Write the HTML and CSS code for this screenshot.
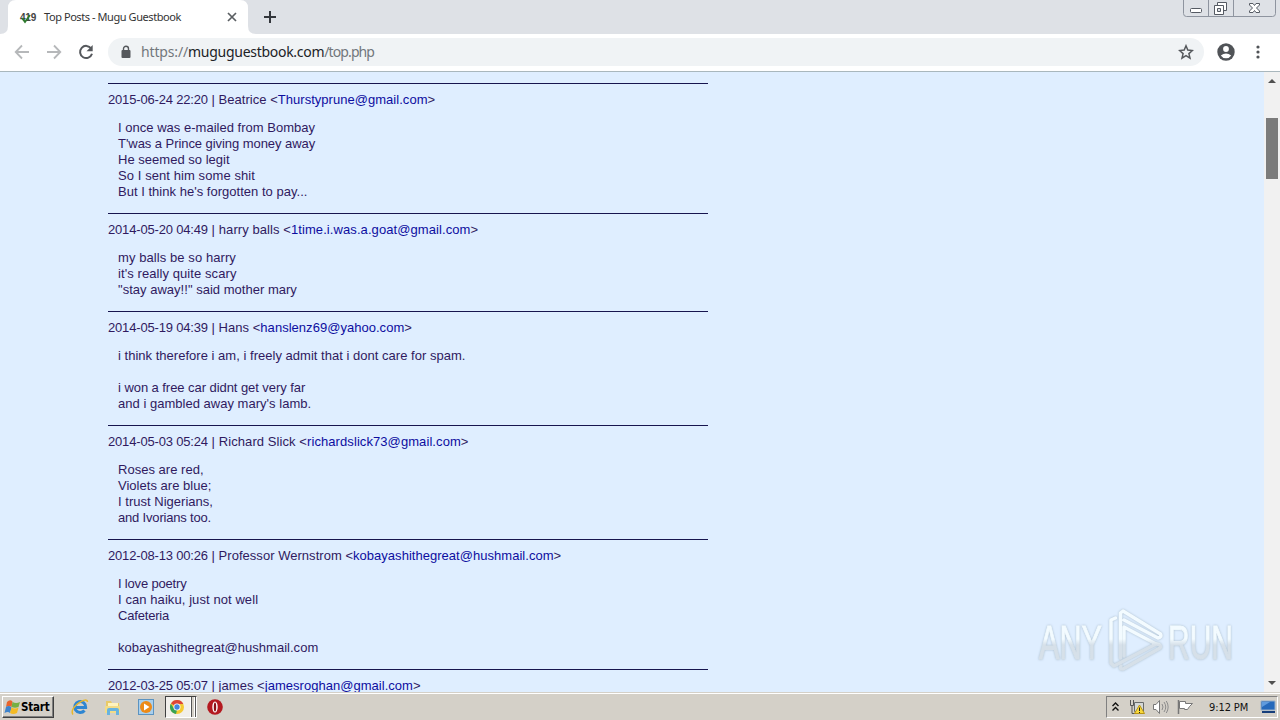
FILE: index.html
```html
<!DOCTYPE html>
<html lang="en">
<head>
<meta charset="utf-8">
<title>Top Posts - Mugu Guestbook</title>
<link rel="stylesheet" href="styles.css">
</head>
<body>
<div class="screen">
  <header class="tabstrip">
    <svg class="tab-shape" width="264" height="34" viewBox="0 0 264 34"><path d="M0 34Q8 34 8 26V8Q8 0 16 0H240Q248 0 248 8V26Q248 34 256 34Z" fill="#fff"/></svg>
    <div class="tab">
      <span class="favicon">419<svg width="12" height="10" viewBox="0 0 12 10"><path d="M1 4L4 8L9 1" fill="none" stroke="#2c7a2c" stroke-width="1.8"/></svg></span>
      <span class="tab-title">Top Posts - Mugu Guestbook</span>
      <svg class="tab-close" width="10" height="10" viewBox="0 0 10 10"><path d="M1 1L9 9M9 1L1 9" stroke="#5a5e62" stroke-width="1.7"/></svg>
    </div>
    <svg class="new-tab" width="14" height="14" viewBox="0 0 14 14"><path d="M7 1V13M1 7H13" stroke="#33363c" stroke-width="2"/></svg>
    <svg class="window-buttons" width="94" height="18" viewBox="0 0 94 18">
      <path d="M.5 0V13.500Q.5 16.500 3.500 16.500H89.500Q92.500 16.500 92.500 13.500V0M25.500 0V16M50.500 0V16" fill="none" stroke="#8e949f"/>
      <rect x="7.500" y="8.500" width="11" height="4" rx="1" fill="#fff" stroke="#555a63"/>
      <path d="M34.500 2.500H43.500V10.500H34.500Z" fill="#fff" stroke="#555a63"/>
      <path d="M31.500 5.500H40.500V14.500H31.500Z" fill="#fff" stroke="#555a63"/><path d="M34.500 8.500H37.500V11.500H34.500Z" fill="#dee1e6" stroke="#555a63"/>
      <path d="M66.500 3.500H70L71.500 5.500L73 3.500H76.500V5L73.500 8L76.500 11V12.500H73L71.500 10.500L70 12.500H66.500V11L69.500 8L66.500 5Z" fill="#fff" stroke="#555a63"/>
    </svg>
  </header>
  <nav class="toolbar">
    <svg class="nav-icon" width="16" height="16" viewBox="0 0 16 16"><path d="M15 8H2M8 1.500L1.700 8L8 14.500" fill="none" stroke="#b6b8ba" stroke-width="1.8"/></svg>
    <svg class="nav-icon" width="16" height="16" viewBox="0 0 16 16"><path d="M1 8H14M8 1.500L14.300 8L8 14.500" fill="none" stroke="#b6b8ba" stroke-width="1.8"/></svg>
    <svg class="nav-icon" width="16" height="16" viewBox="0 0 16 16"><path d="M13.200 4.500A6.100 6.100 0 1 0 14 9.800" fill="none" stroke="#55585c" stroke-width="2"/><path d="M14.700 1V7.200H8.500Z" fill="#55585c"/></svg>
    <div class="omnibox">
      <svg class="lock" width="10" height="14" viewBox="0 0 10 14"><rect x=".5" y="5" width="9" height="8" rx="1" fill="#55585c"/><path d="M2.500 5.500V3.800A2.400 2.400 0 0 1 7.500 3.800V5.500" fill="none" stroke="#55585c" stroke-width="1.400"/></svg>
      <span class="url"><span class="scheme">https://</span><span class="host">muguguestbook.com</span><span class="path">/top.php</span></span>
      <svg class="star" width="16" height="16" viewBox="0 0 16 16"><path d="M8 1.800L9.800 6.100L14.400 6.500L10.900 9.600L12 14.100L8 11.700L4 14.100L5.100 9.600L1.600 6.500L6.200 6.100Z" fill="none" stroke="#55585c" stroke-width="1.500"/></svg>
    </div>
    <svg class="avatar" width="18" height="18" viewBox="0 0 18 18"><circle cx="9" cy="9" r="8.700" fill="#505357"/><circle cx="9" cy="6" r="2.900" fill="#fff"/><path d="M3.800 12.400Q9 8.700 14.200 12.400Q12.300 15.300 9 15.300Q5.700 15.300 3.800 12.400Z" fill="#fff"/></svg>
    <svg class="more" width="4" height="14" viewBox="0 0 4 14"><g fill="#505357"><circle cx="2" cy="2" r="1.600"/><circle cx="2" cy="7" r="1.600"/><circle cx="2" cy="12" r="1.600"/></g></svg>
  </nav>
  <div class="viewport">
    <main class="page">
      <article class="post"><div class="meta snug"><span class="date">2015-06-24 22:20</span> | Beatrice &lt;<a>Thurstyprune@gmail.com</a>&gt;</div>
        <div class="body">I once was e-mailed from Bombay<br><span class="tight">T'was a Prince giving money away</span><br>He seemed so legit<br><span class="loose">So I sent him some shit</span><br>But I think he's forgotten to pay...</div></article>
      <article class="post"><div class="meta"><span class="date">2014-05-20 04:49</span> | harry balls &lt;<a>1time.i.was.a.goat@gmail.com</a>&gt;</div>
        <div class="body"><span class="loose">my balls be so harry</span><br><span class="loose">it's really quite scary</span><br>"stay away!!" said mother mary</div></article>
      <article class="post"><div class="meta snug"><span class="date">2014-05-19 04:39</span> | Hans &lt;<a>hanslenz69@yahoo.com</a>&gt;</div>
        <div class="body">i think therefore i am, i freely admit that i dont care for spam.<br><br><span class="tight">i won a free car didnt get very far</span><br>and i gambled away mary's lamb.</div></article>
      <article class="post"><div class="meta"><span class="date">2014-05-03 05:24</span> | Richard Slick &lt;<a>richardslick73@gmail.com</a>&gt;</div>
        <div class="body">Roses are red,<br>Violets are blue;<br>I trust Nigerians,<br><span class="tighter">and Ivorians too.</span></div></article>
      <article class="post"><div class="meta snug"><span class="date">2012-08-13 00:26</span> | Professor Wernstrom &lt;<a>kobayashithegreat@hushmail.com</a>&gt;</div>
        <div class="body"><span class="tighter">I love poetry</span><br><span class="loose">I can haiku, just not well</span><br><span class="tighter">Cafeteria</span><br><br>kobayashithegreat@hushmail.com</div></article>
      <article class="post"><div class="meta snug"><span class="date">2012-03-25 05:07</span> | james &lt;<a>jamesroghan@gmail.com</a>&gt;</div></article>
    </main>
    <aside class="scrollbar">
      <svg width="8" height="4" viewBox="0 0 8 4"><path d="M0 4L4 0L8 4Z" fill="#505050"/></svg>
      <div class="thumb"></div>
      <svg class="down" width="8" height="4" viewBox="0 0 8 4"><path d="M0 0L4 4L8 0Z" fill="#505050"/></svg>
    </aside>
    <svg class="watermark" width="224" height="80" viewBox="0 0 224 80">
      <defs><linearGradient id="wm" x1="0" y1="0" x2="0" y2="74" gradientUnits="userSpaceOnUse"><stop offset=".5" stop-color="#f3fbff"/><stop offset=".58" stop-color="#d6e0e9"/></linearGradient></defs>
      <g fill="url(#wm)" stroke="url(#wm)" stroke-width=".9" font-size="48" font-family="Liberation Sans Narrow, Liberation Sans, sans-serif">
        <text x="5" y="57" textLength="63" lengthAdjust="spacingAndGlyphs">ANY</text>
        <text x="134" y="57" textLength="65" lengthAdjust="spacingAndGlyphs">RUN</text>
      </g>
      <g transform="translate(-3 0)" fill="none" stroke="url(#wm)" stroke-width="3.500" stroke-linejoin="round" stroke-linecap="round"><path d="M84.500 16L80 18V61L83 64L125 42L93 25V54"/><path d="M89.500 56V11L92 9L129.500 32Q131 35 127 36L93 18"/><path d="M90 64Q88 67 92 67L129 46Q131 43 126 42"/></g>
    </svg>
  </div>
  <footer class="taskbar">
    <div class="start"><svg width="17" height="16" viewBox="0 0 17 16"><path d="M3 3Q6 0 8.500 2.500L7.500 8Q5 6 2 8Z" fill="#e8642c"/><path d="M8.500 3Q12 5 16 3L14.500 8Q11 9.500 7.500 8Z" fill="#76b043"/><path d="M2 8Q5 6 7.500 8.500L6 14Q4 12 .5 14Z" fill="#3e83cc"/><path d="M7.500 8.500Q11 10.500 14.500 8.500L13 14Q9 16 6 14Z" fill="#f4bb25"/></svg><span>Start</span></div>
    <div class="launch">
      <svg width="18" height="18" viewBox="0 0 18 18"><path d="M13.500 12.500A5.500 5.500 0 1 1 14.700 9.500H5" fill="none" stroke="#2e86d2" stroke-width="3"/><path d="M2 16.500Q-1 12 7 5.500Q16-.5 16.500 4" fill="none" stroke="#e7b72e" stroke-width="1.500"/></svg>
      <svg width="18" height="18" viewBox="0 0 18 18"><path d="M2 3H7L8 5H15V15H2Z" fill="#e9ca67"/><path d="M4 5H14V9H4Z" fill="#fff3bd"/><path d="M1 8H16V15H1Z" fill="#f2dc88"/><path d="M3 17V12Q3 10 5 10H13Q15 10 15 12V17H12V13H6V17Z" fill="#68b3df"/></svg>
      <svg width="18" height="18" viewBox="0 0 18 18"><rect x="1.500" y="1.500" width="15" height="15" fill="#a9cfec" stroke="#5b93c1"/><circle cx="9" cy="9" r="6" fill="#ed8a17"/><path d="M7 5.500L12.500 9L7 12.500Z" fill="#fff"/></svg>
      <div class="chrome-task"><svg width="16" height="16" viewBox="0 0 16 16"><circle cx="8" cy="8" r="7" fill="#f5c930"/><path d="M8 8L2 4.500A7 7 0 0 1 14.300 5H8Z" fill="#dc4638"/><path d="M1.800 4.700L5.300 10L8 11L7 15A7 7 0 0 1 1.800 4.700Z" fill="#37a354"/><circle cx="8" cy="8" r="3.500" fill="#fff"/><circle cx="8" cy="8" r="2.700" fill="#4386de"/></svg></div>
      <svg width="18" height="18" viewBox="0 0 18 18"><circle cx="9" cy="9" r="7.800" fill="#b41920"/><ellipse cx="9" cy="9" rx="2.700" ry="5.600" fill="#fff"/><ellipse cx="9" cy="9" rx="1.200" ry="4.500" fill="#8b1015"/></svg>
    </div>
    <div class="tray">
      <svg width="7" height="10" viewBox="0 0 7 10"><path d="M.5 4L3.500 1L6.500 4M.5 8.500L3.500 5.500L6.500 8.500" fill="none" stroke="#111" stroke-width="1.400"/></svg>
      <svg class="net" width="17" height="16" viewBox="0 0 17 16"><path d="M5.500 3.500H14.500V12.500H5.500Z" fill="#d5d8d7" stroke="#686b6b"/><path d="M1.500 1V6.500H4.500V1M3 6V14.500H8" fill="none" stroke="#555"/><path d="M10.500 6L15.500 14.500H5.500Z" fill="#f8d83b" stroke="#b89414"/><path d="M10.500 8.500V12M10.500 13V14" stroke="#222"/></svg>
      <svg class="vol" width="17" height="16" viewBox="0 0 17 16"><path d="M1.500 5.500H4L7.500 1.500V14.500L4 10.500H1.500Z" fill="#fff" stroke="#777"/><path d="M10 5Q12 8 10 11M12 3Q15.500 8 12 13M14.300 2Q18 8 14.300 14" fill="none" stroke="#8c8c8c"/></svg>
      <svg class="flag" width="17" height="16" viewBox="0 0 17 16"><path d="M1.500 1V15" stroke="#777" stroke-width="1.500"/><path d="M2.500 2.500H8.500V4.500H15.500L12.500 7.500L10.500 10.500H7.500V9.500H2.500Z" fill="#fff" stroke="#777"/></svg>
      <span class="clock">9:12 PM</span>
      <svg class="desk" width="16" height="14" viewBox="0 0 16 14"><path d="M1 1H15V10H1Z" fill="#2569bb" stroke="#96afc9"/><path d="M2 2L10 2L2 7Z" fill="#5f9bde"/><path d="M2 11H15V13H2Z" fill="#173e7a"/></svg>
    </div>
  </footer>
</div>
</body>
</html>
```
FILE: styles.css
```css
* { box-sizing: border-box; }
body { margin: 0; font-family: "Liberation Sans", Arial, sans-serif; }
svg { display: block; flex: none; }
.screen { width: 1280px; height: 720px; display: flex; flex-direction: column; overflow: hidden; white-space: nowrap; }
.tabstrip { height: 34px; flex: none; background: #dee1e6; display: flex; position: relative; }
.tab-shape { position: absolute; left: 0; top: 0; }
.tab { position: relative; width: 248px; height: 34px; padding-left: 20px; display: flex; align-items: center; }
.favicon { position: relative; width: 24px; font: bold 10px "Liberation Sans", sans-serif; letter-spacing: -.2px; color: #444; }
.favicon svg { position: absolute; left: 1px; top: 2px; }
.tab-title { width: 183px; padding-bottom: 2px; font: 11px "Noto Sans", sans-serif; letter-spacing: -.43px; color: #333; }
.new-tab { margin: 10px 0 0 15px; }
.window-buttons { margin: 0 3px 0 auto; }
.toolbar { height: 38px; flex: none; background: #fff; border-bottom: 1px solid #a9b7bd; display: flex; align-items: center; padding: 0 0 2px 14px; gap: 16px; }
.omnibox { width: 1096px; height: 28px; margin-left: -2px; border-radius: 14px; background: #f0f3f5; display: flex; align-items: center; padding: 0 10px 0 13px; }
.url { margin-left: 10px; font: 14px/20px "Noto Sans", sans-serif; letter-spacing: -.41px; color: #72777c; }
.host { letter-spacing: -.28px; color: #202226; }
.scheme { letter-spacing: -.15px; }
.path { letter-spacing: -.9px; }
.star { margin-left: auto; }
.avatar { margin-left: -3px; }
.more { margin-left: 5px; }
.viewport { flex: 1; min-height: 0; position: relative; display: flex; background: #dfeeff; overflow: hidden; }
.page { flex: 1; padding: 11px 0 0 108px; font-size: 13px; line-height: 16px; color: #301a60; }
.post { width: 600px; border-top: 1px solid #17154e; padding: 8px 0 13px; }
.meta { letter-spacing: .08px; }
.snug { letter-spacing: .03px; }
.date { letter-spacing: -.17px; }
.meta a { color: #0d0da0; }
.body { padding: 12px 0 0 10px; letter-spacing: .02px; }
.tight { letter-spacing: -.06px; }
.tighter { letter-spacing: -.18px; }
.loose { letter-spacing: .08px; }
.scrollbar { width: 16px; background: #f1f1f1; display: flex; flex-direction: column; align-items: center; padding: 7px 0; }
.thumb { width: 12px; height: 61px; margin-top: 35px; background: #7b7b7b; }
.down { margin-top: auto; }
.watermark { position: absolute; left: 1034px; top: 530px; filter: drop-shadow(0 0 1px #a9bccb); }
.taskbar { height: 28px; flex: none; background: #d4d0c8; border-top: 1px solid #d4d0c8; box-shadow: inset 0 1px #fff; display: flex; align-items: flex-start; padding-top: 3px; }
.start { width: 52px; height: 22px; margin-left: 2px; border: 1px solid; border-color: #fff #404040 #404040 #fff; box-shadow: inset -1px -1px #808080; display: flex; align-items: center; padding-left: 1px; font: bold 11.5px "DejaVu Sans Condensed", "DejaVu Sans", sans-serif; letter-spacing: -.2px; color: #000; }
.launch { display: flex; align-items: center; height: 22px; margin-left: 17px; gap: 15px; }
.chrome-task { width: 32px; height: 22px; margin: 0 -6px 0 -5px; border: 1px solid #404040; border-color: #404040 #fff #fff #404040; background: linear-gradient(90deg, transparent 24px, #fff 24px 25px, #555 25px 26px, #d4d0c8 26px 28px, #fff 28px 29px, #555 29px 30px), #f1efeb; display: flex; align-items: center; padding-left: 3px; }
.tray { width: 172px; height: 22px; margin: 0 2px 0 auto; border: 1px solid; border-color: #808080 #fff #fff #808080; display: flex; align-items: center; padding-left: 5px; }
.net { margin-left: 10px; }
.vol { margin-left: 6px; }
.flag { margin-left: 8px; }
.clock { width: 50px; margin-left: 15px; font: 11px "DejaVu Sans Condensed", "DejaVu Sans", sans-serif; letter-spacing: -.1px; color: #111; }
.desk { margin-left: 1px; }
```
